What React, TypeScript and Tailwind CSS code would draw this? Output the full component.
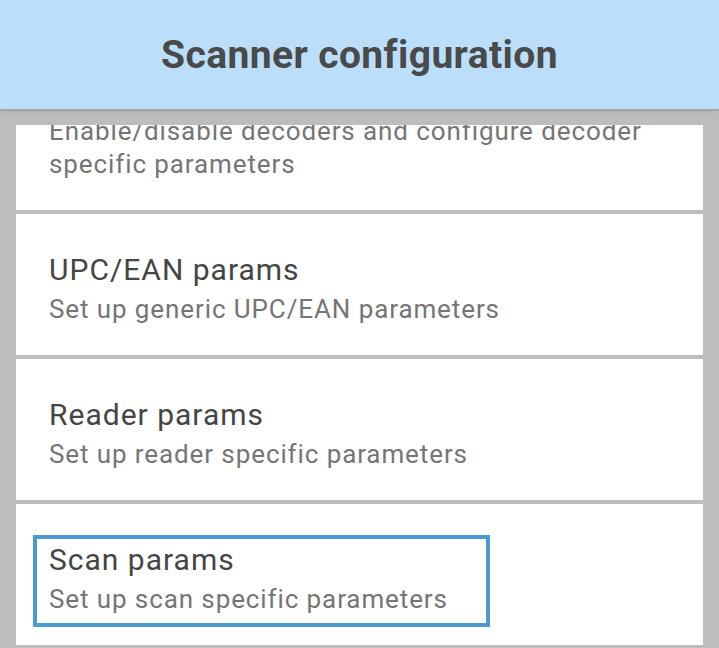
import React from "react";

interface Pref {
  title: string;
  summary: string[];
  focused?: boolean;
}

const prefs: Pref[] = [
  {
    title: "Decoder params",
    summary: ["Enable/disable decoders and configure decoder", "specific parameters"],
  },
  { title: "UPC/EAN params", summary: ["Set up generic UPC/EAN parameters"] },
  { title: "Reader params", summary: ["Set up reader specific parameters"] },
  { title: "Scan params", summary: ["Set up scan specific parameters"], focused: true },
];

function PrefItem({ pref, first }: { pref: Pref; first?: boolean }) {
  const body = (
    <>
      <div className="text-[30px] leading-[36px] tracking-[1px] text-[#454545] whitespace-nowrap">{pref.title}</div>
      <div className="mt-[5px] text-[26px] leading-[33px] tracking-[0.9px] text-[#757575] whitespace-nowrap">
        {pref.summary.map((line, i) => (
          <div key={i}>{line}</div>
        ))}
      </div>
    </>
  );

  return (
    <div
      className={`bg-white mx-4 ${first ? "mt-[-89px] h-[174px]" : "mt-1 h-[141px]"} ${
        pref.focused ? "pt-[31px] pl-[17px]" : "pt-[38px] pl-[33px]"
      }`}
    >
      {pref.focused ? (
        <div className="w-[457px] h-[92px] border-4 border-[#4b9bd2] pl-3 pt-[3px]">{body}</div>
      ) : (
        body
      )}
    </div>
  );
}

export default function App() {
  return (
    <div
      className="w-[719px] h-[648px] overflow-hidden bg-[#bdbdbd] flex flex-col"
      style={{ fontFamily: "Roboto, 'Noto Sans', sans-serif" }}
    >
      <header className="relative z-10 h-[109px] shrink-0 bg-[#bbdefb] flex items-center justify-center shadow-[0_2px_3px_rgba(0,0,0,0.18)]">
        <h1 className="text-[39px] font-bold tracking-[0.4px] text-[#4a4a4a] mt-[2px]">Scanner configuration</h1>
      </header>
      <div className="flex-1 pt-4 overflow-hidden">
        <div className="h-full overflow-hidden">
          {prefs.map((p, i) => (
            <PrefItem key={p.title} pref={p} first={i === 0} />
          ))}
        </div>
      </div>
    </div>
  );
}
